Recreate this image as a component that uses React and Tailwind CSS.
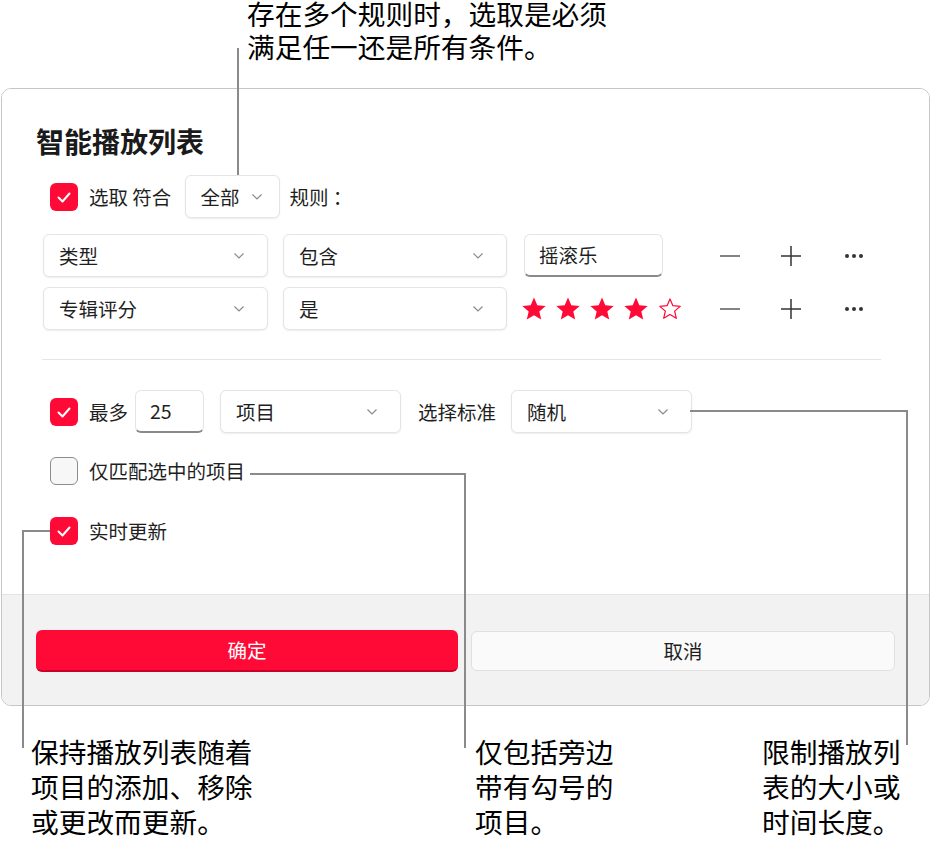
import React from 'react';

const RED = 'bg-[#ff0a37]';

const Chevron = () => (
    <svg width="12" height="8" viewBox="0 0 12 8" className="shrink-0">
        <polyline points="1.5,1.5 6,6 10.5,1.5" fill="none" stroke="#8a8a8a" strokeWidth="1.2" />
    </svg>
);

const Check = ({ checked }) => (
    <div
        className={
            checked
                ? 'w-[28px] h-[28px] rounded-[6px] bg-[#ff0a37] flex items-center justify-center shrink-0'
                : 'w-[28px] h-[28px] rounded-[6px] bg-[#f7f7f7] border border-[#8c8c8c] shrink-0'
        }
    >
        {checked && (
            <svg width="28" height="28" viewBox="0 0 28 28">
                <polyline points="8.5,14.5 12.5,18.5 19.5,10.5" fill="none" stroke="#fff" strokeWidth="2" strokeLinecap="round" strokeLinejoin="round" />
            </svg>
        )}
    </div>
);

const Select = ({ label, width, pr = 'pr-[22px]' }) => (
    <div className={`${width} h-[43px] flex items-center justify-between pl-[15px] ${pr} bg-white border border-[#e4e4e4] rounded-[6px] shadow-[0_1px_2px_rgba(0,0,0,0.07)] shrink-0`}>
        <span className="text-[19.5px] text-[#1f1f1f]">{label}</span>
        <Chevron />
    </div>
);

const Field = ({ value, width }) => (
    <div className={`${width} h-[43px] flex items-center pl-[14px] bg-white border border-[#e4e4e4] border-b-[2px] border-b-[#8a8a8a] rounded-[6px] shrink-0`}>
        <span className="text-[19.5px] text-[#1f1f1f]">{value}</span>
    </div>
);

const Star = ({ filled }) => (
    <svg width="28" height="28" viewBox="0 0 24 24" className="shrink-0">
        <path
            d="M12 2.2l2.85 6.6 7.15.6-5.45 4.7 1.65 7-6.2-3.75-6.2 3.75 1.65-7L2 9.4l7.15-.6z"
            fill={filled ? '#ff0a37' : 'none'}
            stroke="#ff0a37"
            strokeWidth={filled ? '0' : '1.2'}
            strokeLinejoin="round"
            transform={filled ? '' : 'translate(1.5 1.5) scale(0.875)'}
        />
    </svg>
);

const RowTools = () => (
    <div className="flex items-center">
        <svg width="20" height="20" viewBox="0 0 20 20" className="shrink-0">
            <line x1="0" y1="10" x2="20" y2="10" stroke="#5a5a5a" strokeWidth="1.5" />
        </svg>
        <svg width="20" height="20" viewBox="0 0 20 20" className="ml-[41px] shrink-0">
            <line x1="0" y1="10" x2="20" y2="10" stroke="#333" strokeWidth="1.5" />
            <line x1="10" y1="0" x2="10" y2="20" stroke="#333" strokeWidth="1.5" />
        </svg>
        <svg width="20" height="20" viewBox="0 0 20 20" className="ml-[43px] shrink-0">
            <circle cx="3" cy="10" r="2" fill="#333" />
            <circle cx="10" cy="10" r="2" fill="#333" />
            <circle cx="17" cy="10" r="2" fill="#333" />
        </svg>
    </div>
);

const Line = ({ className }) => <div className={`absolute bg-[#8a8a8a] ${className}`} />;

const App = () => {
    return (
        <div className="relative w-[934px] h-[843px] bg-white overflow-hidden font-['Noto_Sans_CJK_SC',sans-serif] text-black">
            {/* top note */}
            <div className="h-[88px] pl-[247px] flex flex-col">
                <div className="-mt-[3px] text-[27.7px] leading-[33px]">
                    <p>存在多个规则时，选取是必须</p>
                    <p>满足任一还是所有条件。</p>
                </div>
            </div>

            {/* dialog */}
            <div className="ml-[1px] w-[929px] border border-[#c6c6c6] rounded-[10px] overflow-hidden">
                <div className="h-[505px] bg-white pt-[34px]">
                    <h1 className="ml-[34px] text-[28px] leading-[36px] font-bold text-[#1a1a1a]">智能播放列表</h1>

                    <div className="mt-[16px] ml-[48px] flex items-center h-[43px]">
                        <Check checked />
                        <span className="ml-[11px] text-[19.5px] text-[#1f1f1f]">选取 符合</span>
                        <div className="ml-[14px] w-[95px] h-[43px] flex items-center gap-[12px] pl-[14px] bg-white border border-[#e4e4e4] rounded-[6px] shadow-[0_1px_2px_rgba(0,0,0,0.07)]">
                            <span className="text-[19.5px] text-[#1f1f1f]">全部</span>
                            <Chevron />
                        </div>
                        <span className="ml-[9px] text-[19.5px] text-[#1f1f1f]">规则 ：</span>
                    </div>

                    <div className="mt-[16px] ml-[41px] flex items-center">
                        <Select label="类型" width="w-[225px]" />
                        <div className="ml-[15px]"><Select label="包含" width="w-[224px]" /></div>
                        <div className="ml-[17px] w-[196px]"><Field value="摇滚乐" width="w-[139px]" /></div>
                        <RowTools />
                    </div>

                    <div className="mt-[10px] ml-[41px] flex items-center">
                        <Select label="专辑评分" width="w-[225px]" />
                        <div className="ml-[15px]"><Select label="是" width="w-[224px]" /></div>
                        <div className="ml-[13px] w-[200px] flex items-center gap-[6px]">
                            <Star filled />
                            <Star filled />
                            <Star filled />
                            <Star filled />
                            <Star />
                        </div>
                        <RowTools />
                    </div>

                    <div className="mt-[29px] ml-[40px] mr-[48px] h-px bg-[#e6e6e6]" />

                    <div className="mt-[30px] ml-[48px] flex items-center h-[43px]">
                        <Check checked />
                        <span className="ml-[11px] text-[19.5px] text-[#1f1f1f]">最多</span>
                        <div className="ml-[7px]"><Field value="25" width="w-[69px]" /></div>
                        <div className="ml-[16px]"><Select label="项目" width="w-[181px]" /></div>
                        <span className="ml-[17px] text-[19.5px] text-[#1f1f1f]">选择标准</span>
                        <div className="ml-[15px]"><Select label="随机" width="w-[181px]" /></div>
                    </div>

                    <div className="mt-[24px] ml-[48px] flex items-center h-[28px]">
                        <Check />
                        <span className="ml-[11px] text-[19.5px] text-[#1f1f1f]">仅匹配选中的项目</span>
                    </div>

                    <div className="mt-[32px] ml-[48px] flex items-center h-[28px]">
                        <Check checked />
                        <span className="ml-[11px] text-[19.5px] text-[#1f1f1f]">实时更新</span>
                    </div>
                </div>

                <div className="h-[111px] bg-[#f2f2f2] border-t border-[#e4e4e4] pt-[35px] px-[34px] flex items-start gap-[13px]">
                    <button className={`flex-1 h-[42px] rounded-[6px] ${RED} border-b-[2px] border-b-[#c8002a] text-white text-[19.5px]`}>确定</button>
                    <button className="flex-1 h-[40px] mt-[1px] rounded-[6px] bg-[#fafafa] border border-[#e0e0e0] text-[#1f1f1f] text-[19.5px]">取消</button>
                </div>
            </div>

            {/* bottom notes */}
            <div className="mt-[28px] flex text-[27.7px] leading-[35px]">
                <div className="ml-[31px] w-[444px]">
                    <p>保持播放列表随着</p>
                    <p>项目的添加、移除</p>
                    <p>或更改而更新。</p>
                </div>
                <div className="w-[287px]">
                    <p>仅包括旁边</p>
                    <p>带有勾号的</p>
                    <p>项目。</p>
                </div>
                <div>
                    <p>限制播放列</p>
                    <p>表的大小或</p>
                    <p>时间长度。</p>
                </div>
            </div>

            {/* callout lines */}
            <Line className="left-[237px] top-[48px] w-[2px] h-[127px]" />
            <Line className="left-[690px] top-[410px] w-[218px] h-[2px]" />
            <Line className="left-[906px] top-[410px] w-[2px] h-[335px]" />
            <Line className="left-[250px] top-[473px] w-[216px] h-[2px]" />
            <Line className="left-[464px] top-[473px] w-[2px] h-[275px]" />
            <Line className="left-[22px] top-[530px] w-[28px] h-[2px]" />
            <Line className="left-[22px] top-[530px] w-[2px] h-[218px]" />
        </div>
    );
};

export default App;
